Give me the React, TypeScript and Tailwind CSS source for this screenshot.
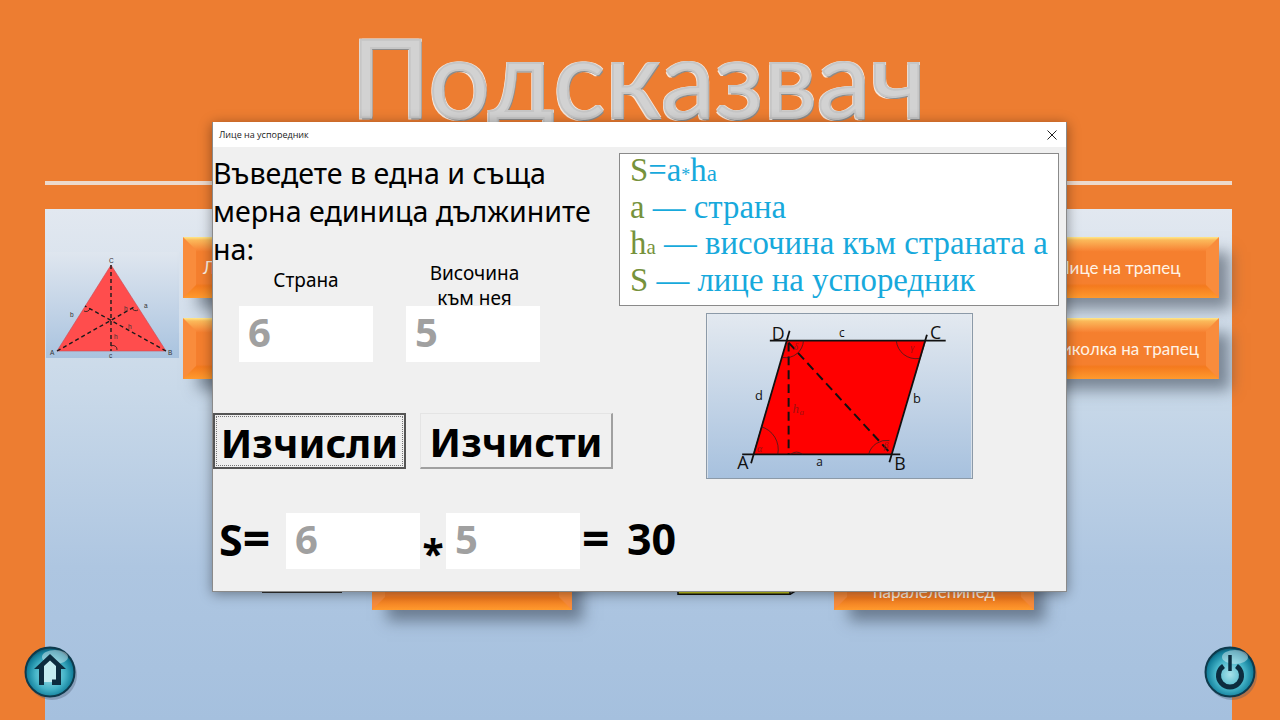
function OrbDefs({ id }: { id: string }) {
  return (
    <defs>
      <radialGradient id={id} cx="50%" cy="55%" r="55%">
        <stop offset="0%" stopColor="#a9e2ea" />
        <stop offset="55%" stopColor="#45b4c8" />
        <stop offset="85%" stopColor="#13809c" />
        <stop offset="100%" stopColor="#0b5068" />
      </radialGradient>
    </defs>
  );
}

function HomeOrb() {
  return (
    <svg width="54" height="56" viewBox="0 0 54 56">
      <OrbDefs id="home-orb" />
      <ellipse cx="29" cy="31" rx="25" ry="25" fill="#4a5a70" opacity="0.35" />
      <circle cx="27" cy="28" r="24.5" fill="url(#home-orb)" stroke="#0e3a4c" strokeWidth="2" />
      <ellipse cx="32" cy="13" rx="13" ry="7" fill="#ffffff" opacity="0.4" />
      <path d="M27 15 L36 24 V38 H18 V24 Z" fill="#c4ecf0" />
      <path
        d="M27 10 L43 25 L38 25 L38 41 L29 41 L29 35.5 L33 35.5 L33 22 L27 16.5 L21 22 L21 41 L16 41 L16 25 L11 25 Z"
        fill="#0c2c3e"
      />
    </svg>
  );
}

function PowerOrb() {
  return (
    <svg width="54" height="56" viewBox="0 0 54 56">
      <OrbDefs id="power-orb" />
      <ellipse cx="29" cy="31" rx="25" ry="25" fill="#4a5a70" opacity="0.35" />
      <circle cx="27" cy="28" r="24.5" fill="url(#power-orb)" stroke="#0e3a4c" strokeWidth="2" />
      <ellipse cx="32" cy="13" rx="13" ry="7" fill="#ffffff" opacity="0.4" />
      <path d="M20.5 22 A11.5 11.5 0 1 0 33.5 22" fill="none" stroke="#0c2c3e" strokeWidth="5" />
      <path d="M27 11 V27" stroke="#0c2c3e" strokeWidth="3.5" />
    </svg>
  );
}

function TriangleThumb() {
  return (
    <svg width="133" height="106" viewBox="46 252 133 106" className="block">
      <defs>
        <linearGradient id="thumb-bg" x1="0" y1="0" x2="0" y2="1">
          <stop offset="0%" stopColor="#dfe6ef" />
          <stop offset="100%" stopColor="#a9c3df" />
        </linearGradient>
      </defs>
      <rect x="46" y="252" width="133" height="106" fill="url(#thumb-bg)" />
      <path d="M111 265 L166 351 L57 351 Z" fill="#ff4d4d" stroke="#c94a55" strokeWidth="0.6" />
      <g stroke="#1a1a1a" strokeWidth="1.4" strokeDasharray="4 3" fill="none">
        <path d="M111 265 V351" />
        <path d="M57 351 L136 306" />
        <path d="M166 351 L85 306" />
      </g>
      <g fill="none" stroke="#1a1a1a" strokeWidth="0.8">
        <path d="M84 311 a4 4 0 0 0 6 -3" />
        <path d="M132 308 a4 4 0 0 0 6 2" />
        <path d="M111 346 a4 4 0 0 1 6 4" />
      </g>
      <g fontFamily="'Liberation Sans', sans-serif" fontSize="6.5" fill="#333333">
        <text x="109" y="263">C</text>
        <text x="50" y="355">A</text>
        <text x="168" y="355">B</text>
        <text x="109" y="358">c</text>
        <text x="70" y="317">b</text>
        <text x="144" y="308">a</text>
        <text x="124" y="311">h</text>
        <text x="128" y="329">h</text>
        <text x="114" y="339">h</text>
      </g>
    </svg>
  );
}

function ParallelogramPicture() {
  return (
    <svg width="267" height="166" viewBox="706 313 267 166" className="block border border-[#8c9aa8]">
      <defs>
        <linearGradient id="pic-bg" x1="0" y1="0" x2="0" y2="1">
          <stop offset="0%" stopColor="#e3e9f0" />
          <stop offset="100%" stopColor="#a7c1de" />
        </linearGradient>
      </defs>
      <rect x="706" y="313" width="267" height="166" fill="url(#pic-bg)" />
      <path d="M786 340 L927 340 L892 455 L752 455 Z" fill="#ff0000" />
      <g stroke="#111111" strokeWidth="1.8" fill="none">
        <path d="M769 340 H947" />
        <path d="M741 455 H901" />
        <path d="M789 330 L750 464" />
        <path d="M928 334 L890 463" />
      </g>
      <g stroke="#111111" strokeWidth="2" strokeDasharray="9 5" fill="none">
        <path d="M788 342 V455" />
        <path d="M788 342 L892 455" />
      </g>
      <g stroke="#222222" strokeWidth="0.7" fill="none">
        <path d="M760 427 A24 24 0 0 1 777 455" />
        <path d="M790 455 A10 10 0 0 1 802 455" />
        <path d="M869 455 A19 19 0 0 1 890 441" />
        <path d="M803 340 A18 18 0 0 1 782 357" />
        <path d="M897 340 A20 20 0 0 0 920 358" />
      </g>
      <g fontFamily="'Open Sans', sans-serif" fill="#111111">
        <text x="771" y="339" fontSize="18">D</text>
        <text x="931" y="338" fontSize="18">C</text>
        <text x="736" y="470" fontSize="18">A</text>
        <text x="895" y="471" fontSize="18">B</text>
        <text x="839" y="336" fontSize="12">c</text>
        <text x="754" y="400" fontSize="13">d</text>
        <text x="914" y="403" fontSize="13">b</text>
        <text x="816" y="467" fontSize="12">a</text>
      </g>
      <g fontFamily="'Liberation Serif', serif" fontStyle="italic" fill="#a01010">
        <text x="792" y="413" fontSize="13">h</text>
        <text x="799" y="415" fontSize="9">a</text>
        <text x="756" y="453" fontSize="10">α</text>
        <text x="884" y="450" fontSize="10">β</text>
        <text x="911" y="350" fontSize="10">γ</text>
        <text x="793" y="349" fontSize="10">δ</text>
      </g>
    </svg>
  );
}

function SlideButton({ label, className }: { label?: string; className: string }) {
  return (
    <div
      className={`relative flex h-[61px] w-[200px] items-center whitespace-nowrap bg-[linear-gradient(to_bottom,#ffe98a_0%,#fbb95a_5%,#f88a3a_20%,#f57f2e_24%,#f57f2e_76%,#f47a1e_80%,#ff9a2e_100%)] font-['Lato',sans-serif] text-[17px] text-[#fff3e6] shadow-[13px_13px_14px_-2px_rgba(55,65,80,0.55)] ${className}`}
    >
      <div className="absolute inset-y-0 left-0 w-[13px] bg-[#f98c3c] [clip-path:polygon(0_0,100%_13px,100%_calc(100%-13px),0_100%)]" />
      <div className="absolute inset-y-0 right-0 w-[13px] bg-[#f98c3c] [clip-path:polygon(100%_0,0_13px,0_calc(100%-13px),100%_100%)]" />
      {label}
    </div>
  );
}

function CalcField({ value }: { value: string }) {
  return (
    <div className="flex h-[56px] w-[134px] shrink-0 items-center bg-white pb-[4px] pl-[9px] font-['Noto_Sans',sans-serif] text-[40px] font-bold leading-none text-[#a0a0a0]">
      {value}
    </div>
  );
}

function Dialog() {
  return (
    <div className="absolute left-[212px] top-[122px] flex h-[470px] w-[855px] flex-col border border-[#8a8a8a] border-t-0 bg-[#f0f0f0] text-black shadow-[0_2px_12px_rgba(0,0,0,0.4)] font-['Noto_Sans',sans-serif]">
      {/* Title bar */}
      <div className="flex h-[25px] shrink-0 items-center justify-between bg-white pl-[6px] pr-[9px]">
        <span className="font-['Open_Sans',sans-serif] text-[9px] text-[#222]">Лице на успоредник</span>
        <svg width="10" height="10" viewBox="0 0 10 10">
          <path d="M0.5 0.5 L9.5 9.5 M9.5 0.5 L0.5 9.5" stroke="#222" strokeWidth="1" />
        </svg>
      </div>

      <div className="flex">
        {/* Left column */}
        <div className="w-[406px] shrink-0">
          <p className="pt-[7px] text-[28.6px] leading-[38px]">
            Въведете в една и съща
            <br />
            мерна единица дължините
            <br />
            на:
          </p>
          <div className="-mb-[5px] -mt-[7px] flex gap-[33px] pl-[26px] text-center text-[19px] leading-[25px]">
            <div className="flex h-[50px] w-[134px] items-center justify-center pb-[12px]">Страна</div>
            <div className="h-[50px] w-[134px] pl-[3px]">
              Височина
              <br />
              към нея
            </div>
          </div>
          <div className="flex gap-[33px] pl-[26px]">
            <CalcField value="6" />
            <CalcField value="5" />
          </div>
          <div className="mt-[51px] flex gap-[14px] text-[40px] font-bold leading-none">
            <div className="flex h-[56px] w-[193px] items-center justify-center border-2 border-[#555] pt-[3px] outline-1 -outline-offset-4 outline-dotted outline-[#777]">
              Изчисли
            </div>
            <div className="flex h-[56px] w-[193px] items-center justify-center border border-[#e4e4e4] border-b-2 border-r-2 border-b-[#a0a0a0] border-r-[#a0a0a0] pt-[3px]">
              Изчисти
            </div>
          </div>
          <div className="mt-[44px] flex h-[56px] items-center whitespace-nowrap text-[43px] font-bold leading-none">
            <span className="w-[73px] shrink-0 pb-[6px] pl-[6px]">
              S<span className="text-[48px] leading-none">=</span>
            </span>
            <CalcField value="6" />
            <span className="w-[26px] shrink-0 pt-[22px] text-center text-[39px]">*</span>
            <CalcField value="5" />
            <span className="w-[47px] shrink-0 pb-[6px] pl-[2px] text-[48px]">=</span>
            <span className="pb-[6px]">30</span>
          </div>
        </div>

        {/* Right column */}
        <div className="pt-[6px]">
          <div className="h-[153px] w-[440px] border border-[#8a8a8a] bg-white pl-[10px] font-['Liberation_Serif',serif] text-[32.8px] leading-[33px] text-[#17a9dc]">
            <div className="h-[36.5px]">
              <span className="text-[#76923c]">S</span>=a<span className="text-[18px] leading-none">*</span>h
              <span className="text-[23px] leading-none">a</span>
            </div>
            <div className="h-[36.5px]">
              <span className="text-[#76923c]">a</span> — страна
            </div>
            <div className="h-[36.5px]">
              <span className="text-[#76923c]">
                h<span className="text-[21px] leading-none">a</span>
              </span>{" "}
              — височина към страната а
            </div>
            <div className="h-[36.5px]">
              <span className="text-[#76923c]">S</span> — лице на успоредник
            </div>
          </div>
          <div className="ml-[87px] mt-[7px]">
            <ParallelogramPicture />
          </div>
        </div>
      </div>
    </div>
  );
}

export default function App() {
  return (
    <div className="relative flex h-[720px] w-[1280px] flex-col overflow-hidden bg-[#ed7d31]">
      {/* Title */}
      <div className="flex h-[181px] shrink-0 justify-center pr-[3px] pt-[16px]">
        <h1 className="font-['Lato',sans-serif] text-[108px] font-normal leading-[120px] text-[#d2d2d2] [-webkit-text-stroke:2px_#c6c6c6] [text-shadow:1.5px_1.5px_0_#8c8c8c,-1.5px_-1.5px_0_#f6e8de,1.5px_-1.5px_0_#f6e8de,-1.5px_1.5px_0_#f6e8de]">
          Подсказвач
        </h1>
      </div>
      <div className="ml-[45px] mr-[48px] h-[4px] shrink-0 bg-[#ecd9cc]" />

      {/* Panel behind the dialog */}
      <div className="ml-[45px] mr-[48px] mt-[24px] flex flex-1 flex-col bg-[linear-gradient(to_bottom,#e2e8f0_0%,#c9d9e9_35%,#aec6e1_70%,#a5c0de_100%)] pr-[13px] pt-[28px]">
        <div className="flex justify-between">
          <div className="flex">
            <div className="ml-[1px] mt-[15px]">
              <TriangleThumb />
            </div>
            <div className="ml-[4px] flex flex-col gap-[20px]">
              <SlideButton label="Л" className="pl-[20px]" />
              <SlideButton className="" />
            </div>
          </div>
          <div className="flex flex-col gap-[20px]">
            <SlideButton label="Лице на трапец" className="justify-center" />
            <SlideButton label="иколка на трапец" className="justify-end pr-[20px]" />
          </div>
        </div>

        <div className="mt-[170px] flex items-end pl-[217px]">
          <div className="mb-[17px] h-[30px] w-[80px] border-b-2 border-[#333]" />
          <div className="ml-[30px]">
            <SlideButton className="" />
          </div>
          <svg width="122" height="30" viewBox="0 0 122 30" className="mb-[14px] ml-[105px]">
            <path d="M1 1 H113 V28.25 H1 Z" fill="#c9cc1e" stroke="#111" strokeWidth="1.5" />
            <path d="M113 28.25 L120 24 V1" fill="none" stroke="#111" strokeWidth="1.5" />
          </svg>
          <div className="ml-[35px]">
            <SlideButton label="паралелепипед" className="justify-center pt-[25px]" />
          </div>
        </div>
      </div>

      {/* Round nav buttons */}
      <div className="absolute left-[23px] top-[644px]">
        <HomeOrb />
      </div>
      <div className="absolute left-[1203px] top-[644px]">
        <PowerOrb />
      </div>

      <Dialog />
    </div>
  );
}
